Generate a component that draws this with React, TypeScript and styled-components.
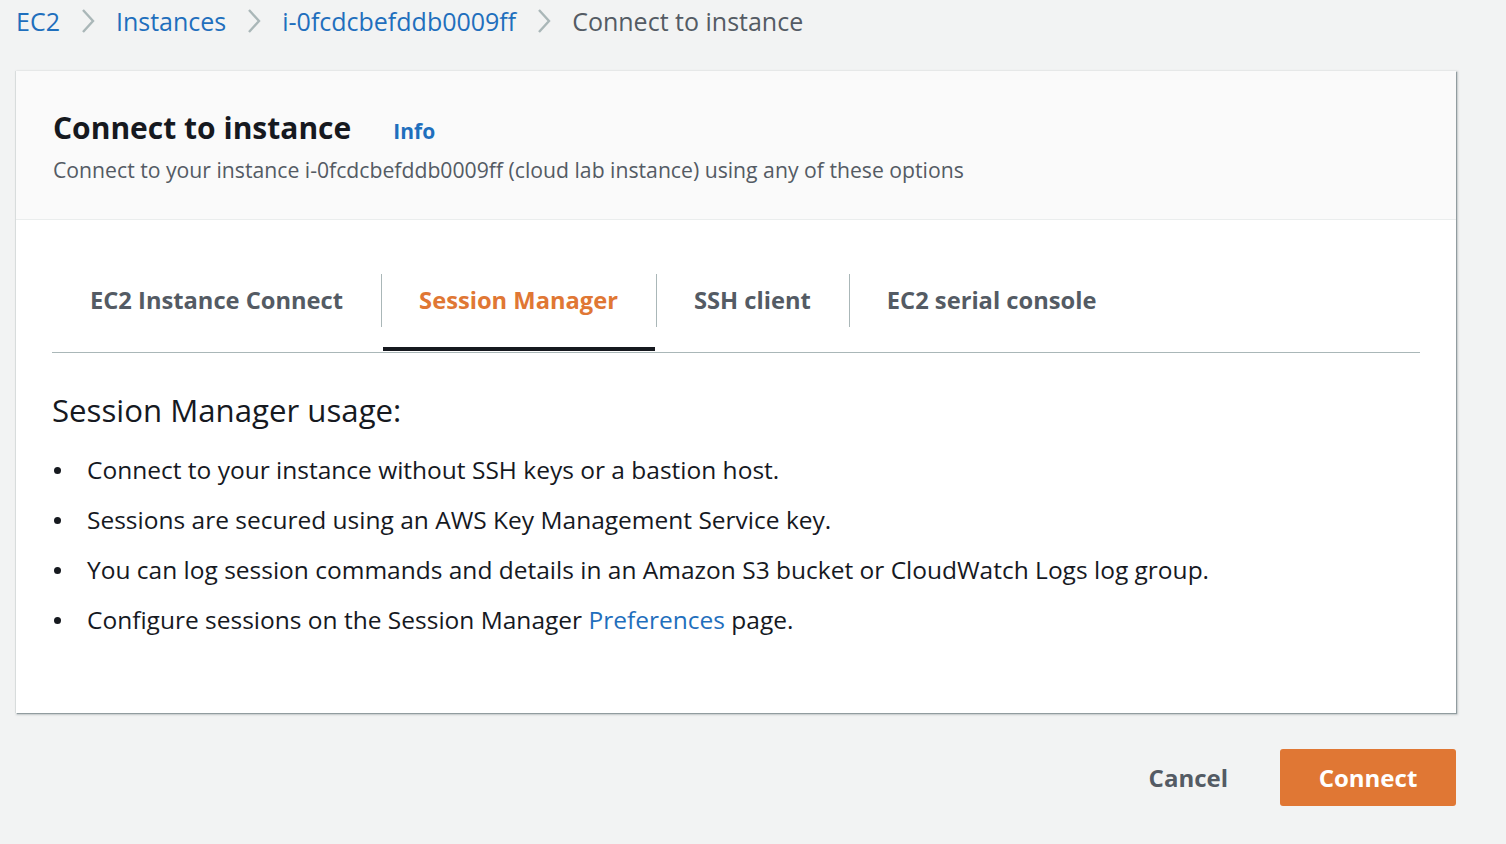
import React from "react";
import styled, { createGlobalStyle } from "styled-components";

const Global = createGlobalStyle`
  html, body { margin: 0; padding: 0; }
  body {
    background: #f2f3f3;
    font-family: "Open Sans", "Noto Sans", Arial, sans-serif;
    color: #16191f;
  }
`;

const Page = styled.div`
  width: 1440px;
  padding: 0 50px 0 16px;
`;

const Breadcrumbs = styled.nav`
  display: flex;
  align-items: center;
  height: 42px;
  gap: 20px;
  font-size: 25px;
`;

const Crumb = styled.a<{ $current?: boolean }>`
  color: ${(p) => (p.$current ? "#545b64" : "#1f6fbd")};
  text-decoration: none;
`;

const Chevron = () => (
  <svg width="16" height="26" viewBox="0 0 16 26" fill="none">
    <path d="M3 2 L13 13 L3 24" stroke="#aab7b8" strokeWidth="2.4" />
  </svg>
);

const Card = styled.section`
  margin-top: 29px;
  background: #fff;
  box-shadow: 1px 1px 1px 0 rgba(0, 28, 36, 0.3), 1px 1px 2px 1px rgba(0, 28, 36, 0.15),
    -1px 0 0 0 rgba(0, 28, 36, 0.06);
`;

const CardHeader = styled.header`
  background: #fafafa;
  border-bottom: 1px solid #eaeded;
  padding: 35px 37px 34px;
  height: 149px;
  box-sizing: border-box;
`;

const TitleRow = styled.div`
  display: flex;
  align-items: baseline;
  gap: 42px;
`;

const Title = styled.h1`
  margin: 0;
  font-size: 30px;
  font-weight: 700;
  color: #16191f;
  line-height: 44px;
`;

const InfoLink = styled.a`
  font-size: 21px;
  font-weight: 700;
  color: #1f6fbd;
`;

const Subtitle = styled.p`
  margin: 5px 0 0;
  font-size: 21.2px;
  color: #545b64;
`;

const CardBody = styled.div`
  padding: 53px 36px 60px;
`;

const TabList = styled.div`
  display: flex;
  border-bottom: 1px solid #aab7b8;
  height: 79px;
`;

const Tab = styled.button<{ $active?: boolean; $divider?: boolean }>`
  position: relative;
  border: none;
  background: none;
  padding: 0 38px;
  height: 100%;
  display: flex;
  align-items: flex-start;
  font-family: inherit;
  font-size: 23.7px;
  font-weight: 700;
  color: ${(p) => (p.$active ? "#e07734" : "#545b64")};
  cursor: pointer;
  &::before {
    content: "";
    display: ${(p) => (p.$divider ? "block" : "none")};
    position: absolute;
    left: 0;
    top: 1px;
    height: 53px;
    width: 1px;
    background: #aab7b8;
  }
  &::after {
    content: "";
    display: ${(p) => (p.$active ? "block" : "none")};
    position: absolute;
    left: 2px;
    right: 1px;
    bottom: 1px;
    height: 4px;
    background: #16191f;
  }
`;

const TabLabel = styled.span`
  line-height: 54px;
`;

const Section = styled.div`
  padding-top: 36px;
`;

const SectionTitle = styled.h2`
  margin: 0;
  font-size: 31.2px;
  font-weight: 400;
  color: #16191f;
  line-height: 42px;
`;

const List = styled.ul`
  list-style: none;
  margin: 22px 0 0;
  padding: 0;
  font-size: 24.5px;
  color: #16191f;
`;

const Item = styled.li`
  display: flex;
  align-items: center;
  gap: 26px;
  line-height: 34px;
  margin-bottom: 16px;
  padding-left: 2px;
`;

const Bullet = styled.span`
  flex: none;
  width: 7px;
  height: 7px;
  border-radius: 50%;
  background: #16191f;
`;

const Link = styled.a`
  color: #1f6fbd;
  text-decoration: none;
`;

const Actions = styled.div`
  display: flex;
  justify-content: flex-end;
  align-items: center;
  gap: 52px;
  margin-top: 36px;
`;

const CancelButton = styled.button`
  border: none;
  background: none;
  font-family: inherit;
  font-size: 24px;
  font-weight: 700;
  color: #545b64;
  padding: 0;
`;

const PrimaryButton = styled.button`
  border: none;
  background: #e07734;
  color: #fff;
  width: 176px;
  height: 57px;
  border-radius: 3px;
  font-family: inherit;
  font-size: 24px;
  font-weight: 700;
`;

const items: React.ReactNode[] = [
  "Connect to your instance without SSH keys or a bastion host.",
  "Sessions are secured using an AWS Key Management Service key.",
  "You can log session commands and details in an Amazon S3 bucket or CloudWatch Logs log group.",
  <>
    Configure sessions on the Session Manager <Link href="#">Preferences</Link> page.
  </>,
];

export default function App() {
  return (
    <>
      <Global />
      <Page>
        <Breadcrumbs>
          <Crumb href="#">EC2</Crumb>
          <Chevron />
          <Crumb href="#">Instances</Crumb>
          <Chevron />
          <Crumb href="#">i-0fcdcbefddb0009ff</Crumb>
          <Chevron />
          <Crumb $current>Connect to instance</Crumb>
        </Breadcrumbs>
        <Card>
          <CardHeader>
            <TitleRow>
              <Title>Connect to instance</Title>
              <InfoLink>Info</InfoLink>
            </TitleRow>
            <Subtitle>
              Connect to your instance i-0fcdcbefddb0009ff (cloud lab instance) using any of these options
            </Subtitle>
          </CardHeader>
          <CardBody>
            <TabList>
              <Tab><TabLabel>EC2 Instance Connect</TabLabel></Tab>
              <Tab $active $divider><TabLabel>Session Manager</TabLabel></Tab>
              <Tab $divider><TabLabel>SSH client</TabLabel></Tab>
              <Tab $divider><TabLabel>EC2 serial console</TabLabel></Tab>
            </TabList>
            <Section>
              <SectionTitle>Session Manager usage:</SectionTitle>
              <List>
                {items.map((content, i) => (
                  <Item key={i}>
                    <Bullet />
                    <span>{content}</span>
                  </Item>
                ))}
              </List>
            </Section>
          </CardBody>
        </Card>
        <Actions>
          <CancelButton>Cancel</CancelButton>
          <PrimaryButton>Connect</PrimaryButton>
        </Actions>
      </Page>
    </>
  );
}
